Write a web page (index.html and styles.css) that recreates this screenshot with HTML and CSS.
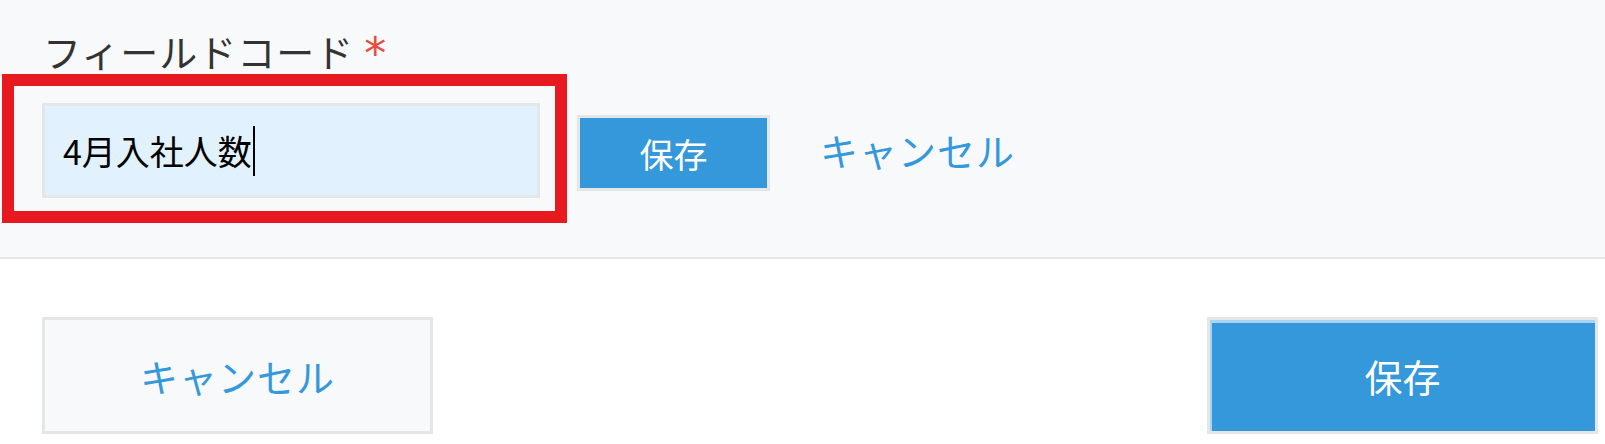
FILE: index.html
```html
<!DOCTYPE html>
<html lang="ja">
<head>
  <meta charset="UTF-8" />
  <meta name="viewport" content="width=device-width, initial-scale=1.0" />
  <title>フィールドコード</title>
  <link rel="stylesheet" href="styles.css">
</head>
<body>
  <div class="edit-panel">
    <div class="field-label">フィールドコード<span class="required">*</span></div>

    <div class="field-row">
      <div class="highlight">
        <div class="field-input">4月入社人数<span class="caret"></span></div>
      </div>
      <button class="btn-small">保存</button>
      <a class="link-cancel" href="#">キャンセル</a>
    </div>
  </div>

  <div class="actions">
    <button class="btn-cancel">キャンセル</button>
    <button class="btn-save">保存</button>
  </div>
</body>
</html>
```

FILE: styles.css
```css
:root {
  --blue: #3498db;
  --border: #e3e7e8;
  --panel: #f7f9fa;
  --red: #e71b1f;
}

html, body {
  margin: 0;
  padding: 0;
  overflow: hidden;
}

body {
  font-family: "Noto Sans CJK JP", "Noto Sans", sans-serif;
  color: #333;
  background: #fff;
}

button {
  font-family: inherit;
  cursor: pointer;
  padding: 0;
  box-sizing: border-box;
}

.edit-panel {
  background: var(--panel);
  border-bottom: 2px solid var(--border);
  padding: 32px 0 34px 0;
}

.field-label {
  height: 38px;
  padding-left: 43px;
  font-size: 38px;
  line-height: 38px;
  letter-spacing: 1px;
  margin-bottom: 4px;
  color: #333;
}

.required {
  display: inline-block;
  color: #e74c3c;
  font-family: "DejaVu Sans", sans-serif;
  font-size: 44px;
  line-height: 38px;
  margin-left: 10px;
  padding-top: 3px;
  vertical-align: top;
}

.field-row {
  display: flex;
  align-items: flex-start;
  padding-left: 2px;
}

.highlight {
  border: 12px solid var(--red);
  padding: 17px 15px 13px 28px;
}

.field-input {
  box-sizing: border-box;
  width: 498px;
  height: 95px;
  border: 3px solid var(--border);
  background: #e1f1fd;
  padding-left: 18px;
  font-size: 34px;
  color: #000;
  display: flex;
  align-items: center;
}

.caret {
  display: inline-block;
  width: 2px;
  height: 50px;
  background: #000;
  margin-left: 1px;
}

.btn-small {
  margin: 41px 0 0 10px;
  width: 193px;
  height: 76px;
  border: 3px solid var(--border);
  background: var(--blue);
  color: #fff;
  font-size: 34px;
}

.link-cancel {
  margin: 57px 0 0 50px;
  font-size: 38px;
  line-height: 38px;
  letter-spacing: 1px;
  color: var(--blue);
  text-decoration: none;
}

.actions {
  display: flex;
  justify-content: space-between;
  padding: 58px 7px 0 42px;
}

.btn-cancel,
.btn-save {
  width: 391px;
  height: 117px;
  border: 3px solid var(--border);
  font-size: 38px;
}

.btn-cancel {
  background: var(--panel);
  color: var(--blue);
  letter-spacing: 1px;
}

.btn-save {
  background: var(--blue);
  color: #fff;
  box-shadow: inset 2px 3px 0 #a9d4f2;
}
```
